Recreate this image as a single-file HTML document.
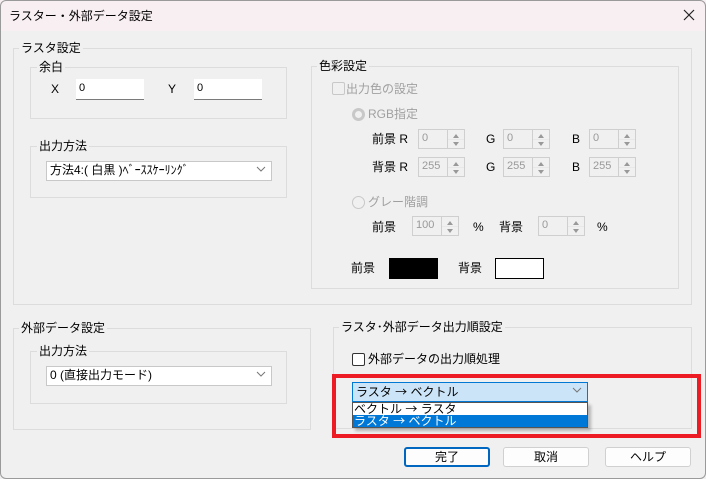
<!DOCTYPE html>
<html><head><meta charset="utf-8"><style>
*{box-sizing:border-box;margin:0;padding:0}
body{width:706px;height:479px;overflow:hidden;background:#fff;font-family:"Liberation Sans","Noto Sans CJK JP",sans-serif;font-size:12px;color:#000;position:relative}
.win{position:absolute;left:0;top:0;width:706px;height:479px;background:#f0f0f0;overflow:hidden}
.bord{position:absolute;left:0;top:0;width:706px;height:479px;border:1px solid #9a9a9a;border-radius:6px;pointer-events:none}
.title{position:absolute;left:0;top:0;width:706px;height:31px;background:#f8eff3}
.a{position:absolute;white-space:nowrap;line-height:14px}
.g{position:absolute;border:1px solid #dcdcdc}
.lbl{position:absolute;background:#f0f0f0;padding:0 2px;line-height:14px;white-space:nowrap}
.in{position:absolute;background:#fff;border-bottom:1px solid #7a7a7a;padding-left:3px;line-height:18px;font-size:11px}
.sel{position:absolute;background:#fff;border:1px solid #c8c8c8;padding-left:3px;line-height:17px}
.chev{position:absolute;right:5px;top:3px;width:10px;height:8px}
.spin{position:absolute;height:20px;width:47px;border:1px solid #cfcfcf;background:#f0f0f0;color:#999;font-size:11px;padding-left:3px;line-height:16px}
.spin:after{content:"";position:absolute;right:0;top:0;width:16px;height:18px;border-left:1px solid #cfcfcf;background:linear-gradient(#e8e8e8,#e8e8e8) 0 9px/100% 1px no-repeat}
.spin i{position:absolute;right:5px;width:0;height:0;border-left:3px solid transparent;border-right:3px solid transparent;z-index:2}
.dis{color:#a0a0a0}
.btn{position:absolute;top:447px;width:86px;height:20px;border:1px solid #d0d0d0;border-radius:3px;background:#fdfdfd;text-align:center;line-height:18px}
.cb{position:absolute;width:13px;height:13px;border:1px solid #333;border-radius:2px;background:#fff}
.ar{font-family:"Noto Sans CJK JP",sans-serif;font-size:12px}
</style></head><body><div class="win">
<div class="title"></div>
<div class="a" style="left:9px;top:9px">ラスター・外部データ設定</div>
<svg class="a" style="left:683px;top:9px" width="12" height="12"><path d="M1 1L11 11M11 1L1 11" stroke="#222" stroke-width="1.2"/></svg>

<div class="g" style="left:13px;top:48px;width:679px;height:257px"></div>
<div class="lbl" style="left:19px;top:41px">ラスタ設定</div>

<div class="g" style="left:30px;top:67px;width:257px;height:52px"></div>
<div class="lbl" style="left:37px;top:60px">余白</div>
<div class="a" style="left:51px;top:82px">X</div>
<div class="in" style="left:76px;top:79px;width:68px;height:21px">0</div>
<div class="a" style="left:168px;top:82px">Y</div>
<div class="in" style="left:194px;top:79px;width:68px;height:21px">0</div>

<div class="g" style="left:30px;top:146px;width:257px;height:52px"></div>
<div class="lbl" style="left:37px;top:139px">出力方法</div>
<div class="sel" style="left:46px;top:161px;width:226px;height:20px">方法4:( 白黒 )ﾍﾞｰｽｽｹｰﾘﾝｸﾞ<svg class="chev" viewBox="0 0 10 8"><path d="M1 2L5 6L9 2" fill="none" stroke="#777"/></svg></div>

<div class="g" style="left:311px;top:66px;width:368px;height:223px"></div>
<div class="lbl" style="left:317px;top:59px">色彩設定</div>
<div class="cb" style="left:332px;top:82px;border-color:#c8c8c8;background:#f0f0f0"></div>
<div class="a dis" style="left:346px;top:82px">出力色の設定</div>
<div style="position:absolute;left:352px;top:108px;width:13px;height:13px;border-radius:50%;border:3px solid #c8c8c8;background:#f0f0f0"></div>
<div class="a dis" style="left:368px;top:107px">RGB指定</div>

<div class="a" style="left:372px;top:132px">前景 R</div>
<div class="spin" style="left:418px;top:129px">0<i style="top:4px;border-bottom:4px solid #999"></i><i style="top:12px;border-top:4px solid #999"></i></div>
<div class="a" style="left:486px;top:132px">G</div>
<div class="spin" style="left:503px;top:129px">0<i style="top:4px;border-bottom:4px solid #999"></i><i style="top:12px;border-top:4px solid #999"></i></div>
<div class="a" style="left:572px;top:132px">B</div>
<div class="spin" style="left:589px;top:129px">0<i style="top:4px;border-bottom:4px solid #999"></i><i style="top:12px;border-top:4px solid #999"></i></div>

<div class="a" style="left:372px;top:160px">背景 R</div>
<div class="spin" style="left:418px;top:157px">255<i style="top:4px;border-bottom:4px solid #999"></i><i style="top:12px;border-top:4px solid #999"></i></div>
<div class="a" style="left:486px;top:160px">G</div>
<div class="spin" style="left:503px;top:157px">255<i style="top:4px;border-bottom:4px solid #999"></i><i style="top:12px;border-top:4px solid #999"></i></div>
<div class="a" style="left:572px;top:160px">B</div>
<div class="spin" style="left:589px;top:157px">255<i style="top:4px;border-bottom:4px solid #999"></i><i style="top:12px;border-top:4px solid #999"></i></div>

<div style="position:absolute;left:352px;top:196px;width:13px;height:13px;border-radius:50%;border:1px solid #c8c8c8;background:#f0f0f0"></div>
<div class="a dis" style="left:368px;top:195px">グレー階調</div>
<div class="a" style="left:372px;top:220px">前景</div>
<div class="spin" style="left:412px;top:216px">100<i style="top:4px;border-bottom:4px solid #999"></i><i style="top:12px;border-top:4px solid #999"></i></div>
<div class="a" style="left:473px;top:220px">%</div>
<div class="a" style="left:499px;top:220px">背景</div>
<div class="spin" style="left:538px;top:216px">0<i style="top:4px;border-bottom:4px solid #999"></i><i style="top:12px;border-top:4px solid #999"></i></div>
<div class="a" style="left:597px;top:220px">%</div>

<div class="a" style="left:351px;top:261px">前景</div>
<div style="position:absolute;left:389px;top:258px;width:49px;height:21px;background:#000"></div>
<div class="a" style="left:458px;top:261px">背景</div>
<div style="position:absolute;left:495px;top:258px;width:49px;height:21px;background:#fff;border:1px solid #000"></div>

<div class="g" style="left:13px;top:328px;width:298px;height:102px"></div>
<div class="lbl" style="left:19px;top:321px">外部データ設定</div>
<div class="g" style="left:30px;top:351px;width:257px;height:53px"></div>
<div class="lbl" style="left:37px;top:344px">出力方法</div>
<div class="sel" style="left:46px;top:366px;width:226px;height:20px">0 (直接出力モード)<svg class="chev" viewBox="0 0 10 8"><path d="M1 2L5 6L9 2" fill="none" stroke="#777"/></svg></div>

<div class="g" style="left:333px;top:327px;width:359px;height:102px"></div>
<div class="lbl" style="left:339px;top:320px">ラスタ･外部データ出力順設定</div>
<div class="cb" style="left:352px;top:353px"></div>
<div class="a" style="left:368px;top:352px">外部データの出力順処理</div>

<div style="position:absolute;left:332px;top:374px;width:369px;height:64px;border:4px solid #ed1c24"></div>
<div class="sel" style="left:352px;top:382px;width:236px;height:20px;background:#cce4f7;border-color:#0078d4">ラスタ <span class="ar">→</span> ベクトル<svg class="chev" viewBox="0 0 10 8"><path d="M1 2L5 6L9 2" fill="none" stroke="#777"/></svg></div>
<div style="position:absolute;left:352px;top:402px;width:236px;height:26px;border:1px solid #555;background:#fff;box-shadow:3px 3px 3px rgba(0,0,0,.25)">
<div style="height:12px;line-height:12px;padding-left:1px">ベクトル <span class="ar">→</span> ラスタ</div>
<div style="height:12px;line-height:12px;padding-left:1px;background:#0078d7;color:#fff">ラスタ <span class="ar">→</span> ベクトル</div></div>

<div class="btn" style="left:404px;border:2px solid #0067c0;line-height:16px">完了</div>
<div class="btn" style="left:503px">取消</div>
<div class="btn" style="left:605px">ヘルプ</div>
<div class="bord"></div>
</div></body></html>
